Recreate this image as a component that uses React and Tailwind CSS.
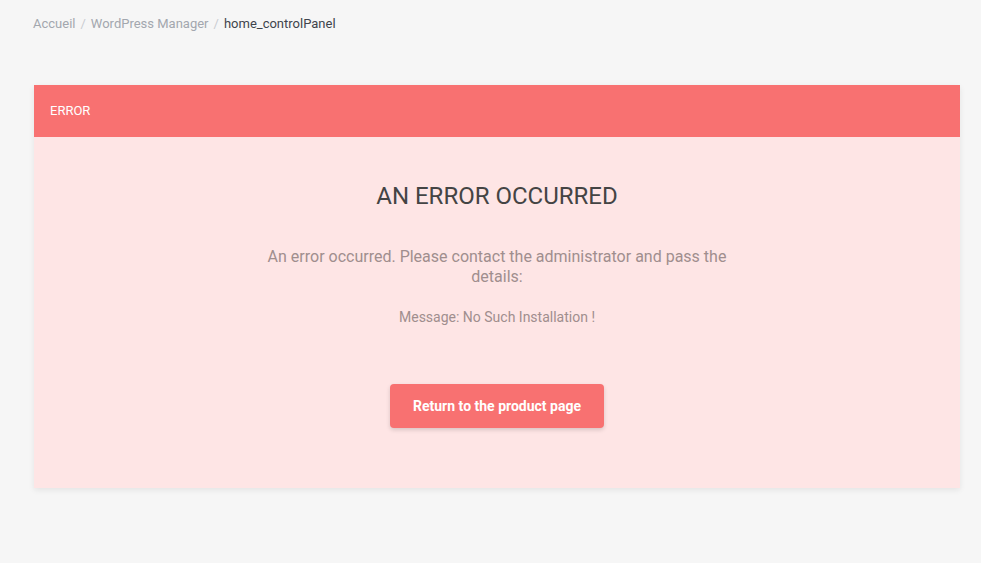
import React from "react";

const App = () => {
  return (
    <div className="min-h-[563px] bg-[#f6f6f6] font-['Roboto',sans-serif]">
      {/* Breadcrumb */}
      <nav className="pl-[33px] pt-[16px] h-[85px] text-[13px] leading-[16px]">
        <span className="text-[#a3a7ae]">Accueil</span>
        <span className="text-[#c9ccd1] mx-[5px]">/</span>
        <span className="text-[#a3a7ae]">WordPress Manager</span>
        <span className="text-[#c9ccd1] mx-[5px]">/</span>
        <span className="text-[#3f444c]">home_controlPanel</span>
      </nav>

      {/* Error card */}
      <div className="ml-[34px] w-[926px] shadow-[0_2px_6px_rgba(0,0,0,0.08)]">
        <div className="h-[52px] bg-[#f87171] flex items-center px-[16px]">
          <span className="text-white text-[13px] font-normal">ERROR</span>
        </div>
        <div className="bg-[#fee5e5] pt-[45px] pb-[60px] flex flex-col items-center text-center">
          <h2 className="text-[24px] leading-[28px] text-[#444444]">AN ERROR OCCURRED</h2>
          <p className="mt-[37px] w-[480px] text-[16px] leading-[20px] text-[#a08e8e]">
            An error occurred. Please contact the administrator and pass the details:
          </p>
          <p className="mt-[20px] text-[14px] leading-[20px] text-[#a08e8e]">
            Message: No Such Installation !
          </p>
          <button className="mt-[57px] w-[214px] h-[44px] rounded-[4px] bg-[#f87171] text-white text-[14px] font-bold shadow-[0_2px_4px_rgba(0,0,0,0.15)]">
            Return to the product page
          </button>
        </div>
      </div>
    </div>
  );
};

export default App;
